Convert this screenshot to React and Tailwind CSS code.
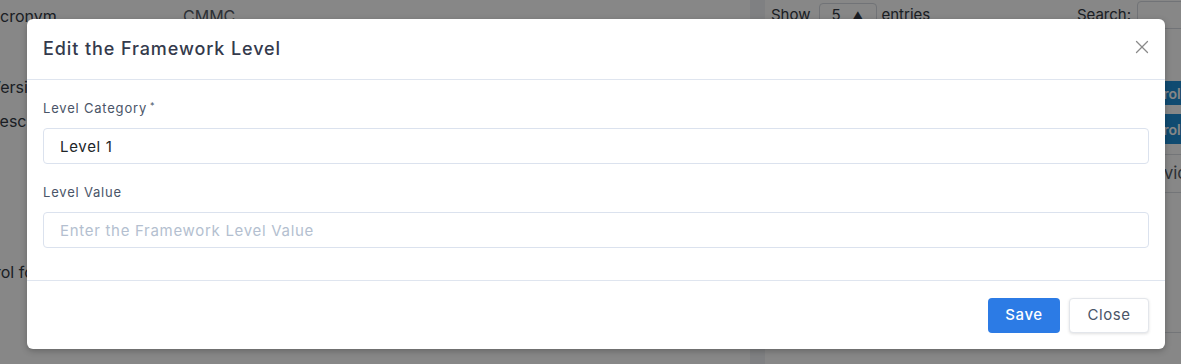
import { X } from 'lucide-react'

const font = { fontFamily: 'Inter, "Noto Sans", sans-serif' }

function BackgroundPage() {
  return (
    <div className="flex h-[364px] w-full bg-[#eef0f4] text-[#333a44]">
      {/* left details card */}
      <div className="w-[750px] shrink-0 bg-white text-[16px]">
        <div className="grid grid-cols-[183px_1fr]">
          <div className="-ml-[11px] h-[32px] pt-[4px]">Acronym</div>
          <div className="pt-[4px] text-[#555c66]">CMMC</div>
        </div>
        <div className="mt-[43px] -ml-[10px]">Version</div>
        <div className="mt-[10px] -ml-[12px]">Description</div>
        <div className="mt-[127px] -ml-[41px]">Control for the level</div>
      </div>
      {/* gap / scrollbar */}
      <div className="w-[15px] shrink-0 bg-[#f0f2f6]" />
      {/* right table card */}
      <div className="min-w-0 flex-1 bg-white pl-[6px]">
        <div className="flex h-[30px] items-center text-[15px]">
          <span>Show</span>
          <div className="ml-[8px] flex h-[24px] w-[58px] items-center gap-3 rounded border border-[#d5d9e0] px-3">
            <span>5</span>
            <span className="text-[10px]">▲</span>
          </div>
          <span className="ml-[5px]">entries</span>
          <span className="ml-auto">Search:</span>
          <div className="ml-[6px] -mr-[20px] h-[28px] w-[64px] rounded border border-[#d5d9e0]" />
        </div>
        <div className="mt-[51px] flex flex-col items-end gap-[9px]">
          <div className="-mr-[20px] flex h-[24px] w-[80px] items-center bg-[#1f8fd6] pl-[10px] text-[14px] font-semibold text-white">Controls</div>
          <div className="-mr-[20px] flex h-[30px] w-[80px] items-center bg-[#1f8fd6] pl-[10px] text-[14px] font-semibold text-white">Controls</div>
        </div>
        <div className="mt-[10px] border-t border-[#d9dde3]" />
        <div className="-mr-[16px] flex h-[37px] items-center justify-end text-[17px] text-[#555c66]">Service</div>
        <div className="border-t border-[#d9dde3]" />
        <div className="h-[139px]" />
        <div className="border-t border-[#d9dde3]" />
      </div>
    </div>
  )
}

function Field({ label, required, value, placeholder }) {
  return (
    <div className="mb-4">
      <label className="mb-2 block h-[24px] text-[13px] leading-[24px] tracking-[0.8px] text-[#4a5568]">
        {label}
        {required && <sup className="ml-[3px] text-[9px] text-[#4a5568]">*</sup>}
      </label>
      <input
        type="text"
        defaultValue={value}
        placeholder={placeholder}
        className="block h-[36px] w-full rounded-[4px] border border-[#dbe2ee] bg-white px-[16px] text-[15px] tracking-[0.7px] text-[#212529] outline-none placeholder:text-[#b4bfd0]"
        style={font}
      />
    </div>
  )
}

export default function App() {
  return (
    <div className="relative h-[364px] w-[1181px] overflow-hidden" style={font}>
      <BackgroundPage />
      {/* overlay */}
      <div className="absolute inset-0 bg-black/[0.47]" />
      {/* modal */}
      <div className="absolute left-[27px] top-[19px] w-[1138px] rounded-[6px] bg-white shadow-[0_2px_6px_rgba(0,0,0,0.25)]">
        <div className="flex h-[61px] items-center justify-between border-b border-[#dfe5ef] px-4">
          <h5 className="-mt-[2px] text-[18px] font-medium tracking-[0.9px] text-[#343a4c]">Edit the Framework Level</h5>
          <button className="-mr-[4px] -mt-[5px] text-[#8a8a8a]">
            <X size={22} strokeWidth={1.4} />
          </button>
        </div>
        <div className="p-4">
          <Field label="Level Category" required value="Level 1" />
          <Field label="Level Value" placeholder="Enter the Framework Level Value" />
        </div>
        <div className="flex h-[69px] items-center justify-end gap-[9px] border-t border-[#dfe5ef] px-4">
          <button className="h-[35px] w-[72px] rounded-[4px] bg-[#2c7be5] text-[15px] font-medium tracking-[0.6px] text-white">
            Save
          </button>
          <button className="h-[35px] w-[80px] rounded-[4px] border border-[#e3e6eb] bg-white text-[15px] tracking-[0.6px] text-[#4a5568] shadow-[0_1px_3px_rgba(0,0,0,0.12)]">
            Close
          </button>
        </div>
      </div>
    </div>
  )
}
